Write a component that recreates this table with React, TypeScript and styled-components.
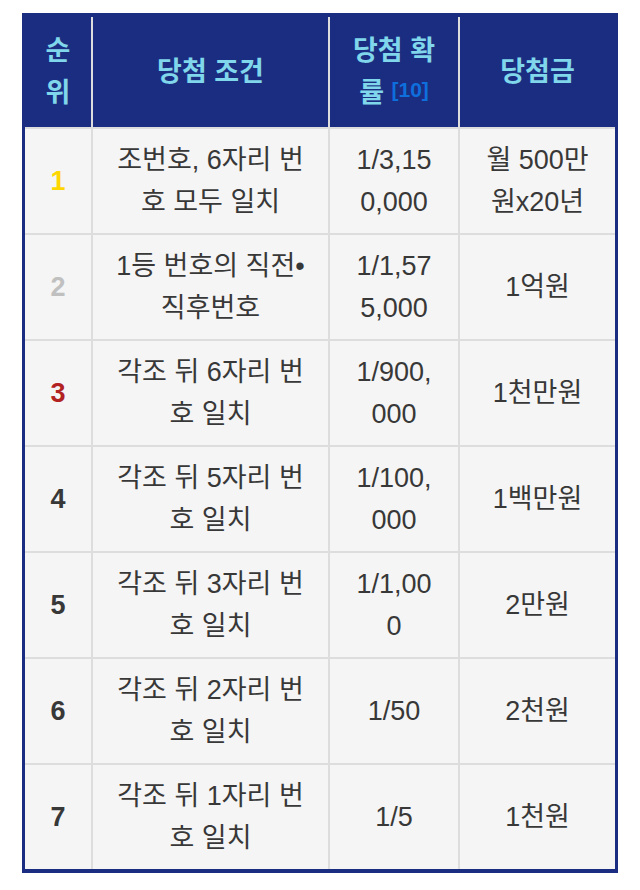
import React from 'react';
import styled, { createGlobalStyle } from 'styled-components';

const navy = '#1b2d80';

const GlobalStyle = createGlobalStyle`
  html, body {
    margin: 0;
    padding: 0;
    background: #ffffff;
  }
  body {
    font-family: "Liberation Sans", "Noto Sans CJK KR", sans-serif;
  }
`;

const Page = styled.div`
  padding: 13px 22px;
`;

const Table = styled.div`
  display: grid;
  grid-template-columns: 66px 235px 128px 155px;
  gap: 2px;
  width: fit-content;
  background: #dddddd;
  border-style: solid;
  border-color: ${navy};
  border-width: 4px 3px 4px 3px;
`;

const Cell = styled.div<{ $padX?: number }>`
  display: flex;
  align-items: center;
  justify-content: center;
  text-align: center;
  padding: 10px ${(p) => p.$padX ?? 18}px;
  background: #f5f5f5;
  color: #383838;
  font-size: 27px;
  line-height: 42px;
`;

const HeadCell = styled(Cell)`
  padding-top: 13px;
  padding-bottom: 13px;
  background: ${navy};
  color: #80d6ea;
  font-weight: 700;
`;

const RankCell = styled(Cell)<{ $tone: string }>`
  color: ${(p) => p.$tone};
  font-weight: 700;
`;

const ProbCell = styled(Cell)`
  word-break: break-all;
`;

const Text = styled.span`
  display: block;
`;

const Ref = styled.sup`
  color: #0e6fdc;
  font-size: 21px;
  line-height: 1;
  vertical-align: 5px;
`;

type Row = { rank: number; cond: string; prob: string; prize: string };

const rows: Row[] = [
  { rank: 1, cond: '조번호, 6자리 번호 모두 일치', prob: '1/3,150,000', prize: '월 500만원x20년' },
  { rank: 2, cond: '1등 번호의 직전•직후번호', prob: '1/1,575,000', prize: '1억원' },
  { rank: 3, cond: '각조 뒤 6자리 번호 일치', prob: '1/900,000', prize: '1천만원' },
  { rank: 4, cond: '각조 뒤 5자리 번호 일치', prob: '1/100,000', prize: '1백만원' },
  { rank: 5, cond: '각조 뒤 3자리 번호 일치', prob: '1/1,000', prize: '2만원' },
  { rank: 6, cond: '각조 뒤 2자리 번호 일치', prob: '1/50', prize: '2천원' },
  { rank: 7, cond: '각조 뒤 1자리 번호 일치', prob: '1/5', prize: '1천원' },
];

const tones: Record<number, string> = {
  1: '#ffd700',
  2: '#c0c0c0',
  3: '#b22222',
};

const App = () => {
  return (
    <Page>
      <GlobalStyle />
      <Table>
        <HeadCell $padX={12}>
          <Text>순위</Text>
        </HeadCell>
        <HeadCell>
          <Text>당첨 조건</Text>
        </HeadCell>
        <HeadCell $padX={20}>
          <Text>
            당첨 확률 <Ref>[10]</Ref>
          </Text>
        </HeadCell>
        <HeadCell>
          <Text>당첨금</Text>
        </HeadCell>
        {rows.map((r) => (
          <React.Fragment key={r.rank}>
            <RankCell $padX={10} $tone={tones[r.rank] ?? '#383838'}>
              <Text>{r.rank}</Text>
            </RankCell>
            <Cell $padX={17}>
              <Text>{r.cond}</Text>
            </Cell>
            <ProbCell $padX={22}>
              <Text>{r.prob}</Text>
            </ProbCell>
            <Cell $padX={22}>
              <Text>{r.prize}</Text>
            </Cell>
          </React.Fragment>
        ))}
      </Table>
    </Page>
  );
};

export default App;
